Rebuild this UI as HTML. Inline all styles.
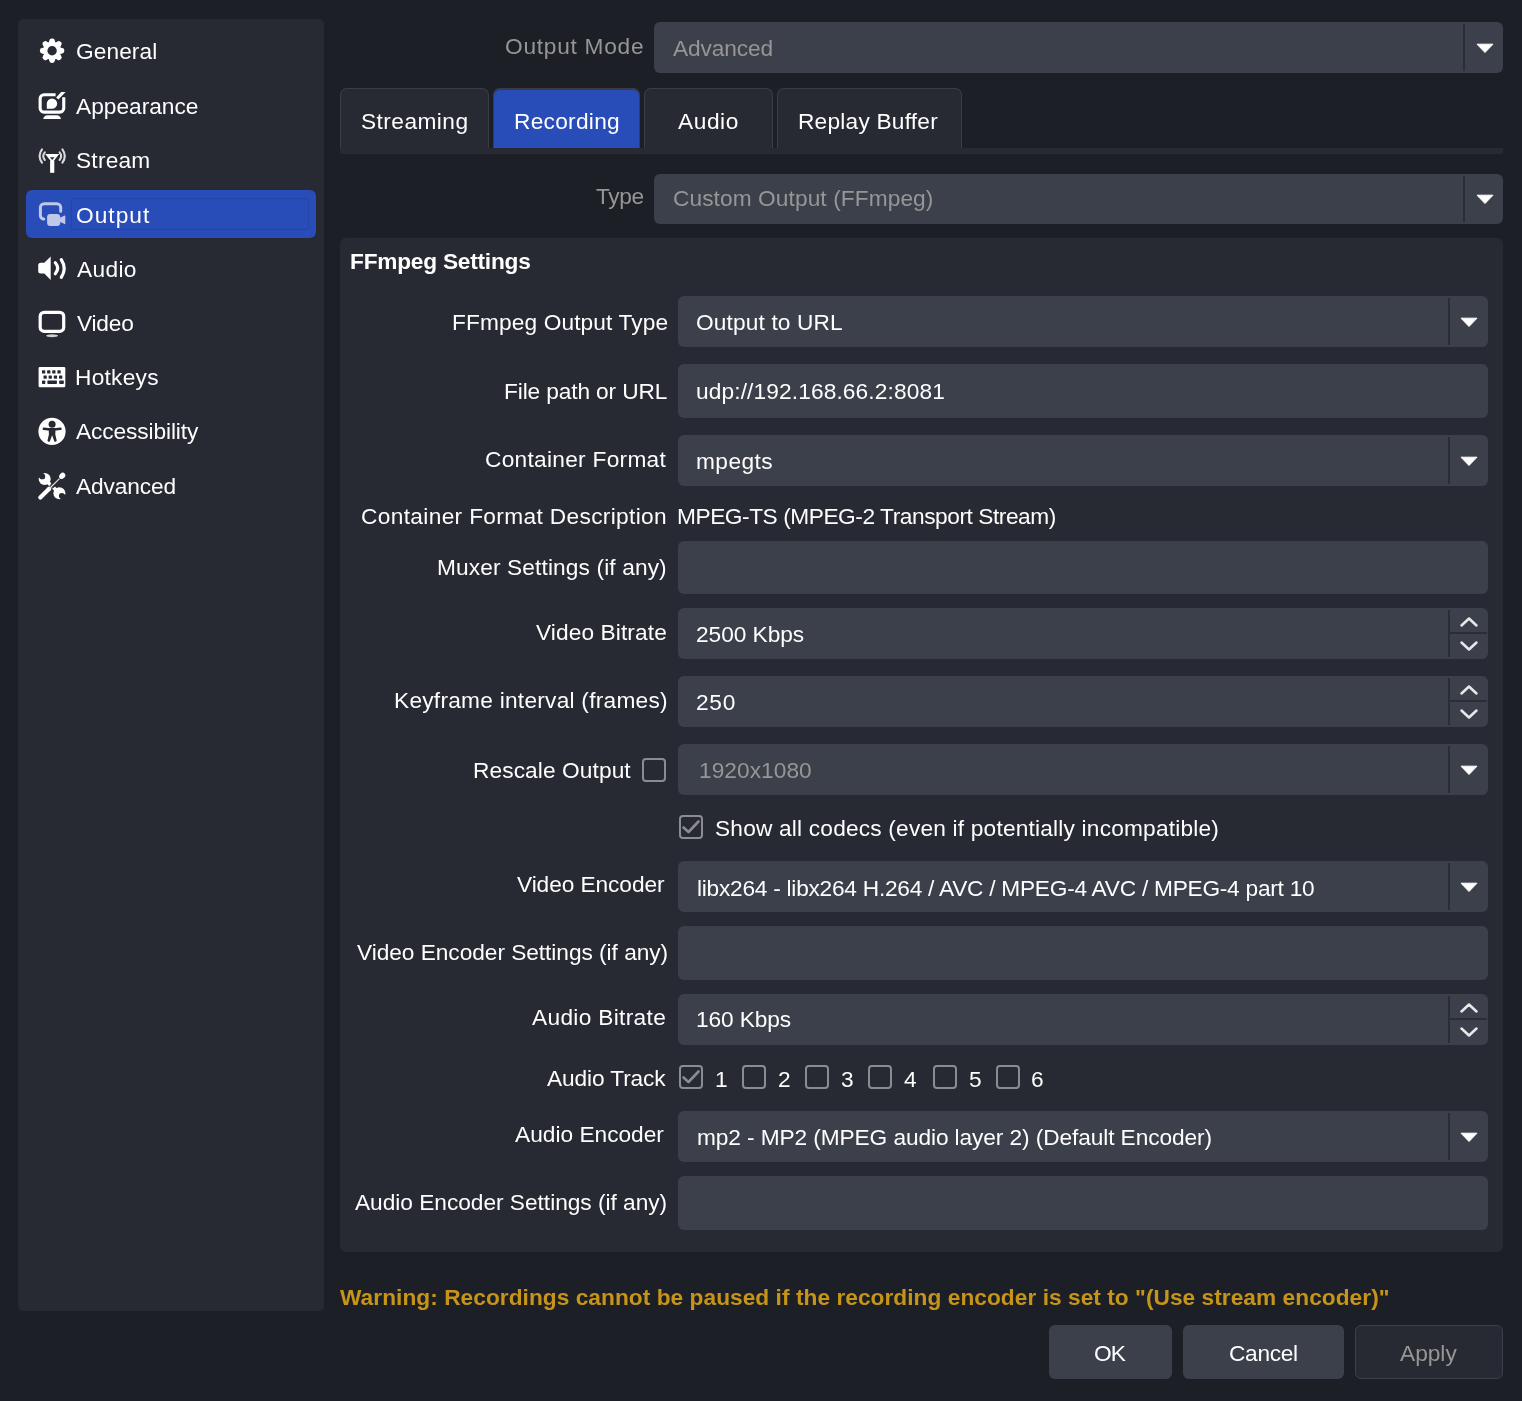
<!DOCTYPE html>
<html><head><meta charset="utf-8"><style>
html,body{margin:0;padding:0;}
body{width:1522px;height:1401px;background:#1d1f26;position:relative;overflow:hidden;font-family:"Liberation Sans",sans-serif;}
.b{position:absolute;}
.t{position:absolute;font-size:22.7px;line-height:30px;white-space:pre;will-change:transform;}
</style></head><body>
<div class=b style="left:18px;top:19px;width:306px;height:1292px;background:#272a33;border-radius:5px;"></div>
<div class=b style="left:26px;top:190px;width:290px;height:48px;background:#284cb8;border-radius:6px;"></div>
<div class=b style="left:71px;top:198px;width:238px;height:32px;background:transparent;border-radius:1px;box-sizing:border-box;border:1px solid #2544a6;"></div>
<div class=t style="left:75.80px;top:36.20px;letter-spacing:0.083px;color:#fefefe;font-weight:400;">General</div>
<div class=t style="left:76.20px;top:91.00px;letter-spacing:0.011px;color:#fefefe;font-weight:400;">Appearance</div>
<div class=t style="left:75.60px;top:145.30px;letter-spacing:0.220px;color:#fefefe;font-weight:400;">Stream</div>
<div class=t style="left:75.60px;top:199.70px;letter-spacing:1.020px;color:#fefefe;font-weight:400;">Output</div>
<div class=t style="left:76.60px;top:253.60px;letter-spacing:0.350px;color:#fefefe;font-weight:400;">Audio</div>
<div class=t style="left:76.50px;top:308.10px;letter-spacing:-0.200px;color:#fefefe;font-weight:400;">Video</div>
<div class=t style="left:74.80px;top:362.40px;letter-spacing:0.267px;color:#fefefe;font-weight:400;">Hotkeys</div>
<div class=t style="left:76.20px;top:416.10px;letter-spacing:-0.100px;color:#fefefe;font-weight:400;">Accessibility</div>
<div class=t style="left:76.20px;top:471.40px;letter-spacing:-0.114px;color:#fefefe;font-weight:400;">Advanced</div>
<div class=b style="left:654px;top:22px;width:849px;height:51px;background:#3c404b;border-radius:6px;"></div>
<div class=b style="left:1463px;top:24px;width:2px;height:47px;background:#2b2e38;border-radius:0px;"></div>
<svg class=b style="left:1475.5px;top:42.5px" width=18 height=10 viewBox="0 0 18 10"><path d="M1 1.2 L17 1.2 L9 9.5 Z" fill="#fefefe" stroke="#fefefe" stroke-width="1" stroke-linejoin="round"/></svg>
<div class=t style="left:505.30px;top:30.70px;letter-spacing:0.740px;color:#969696;font-weight:400;">Output Mode</div>
<div class=t style="left:672.70px;top:32.70px;letter-spacing:-0.100px;color:#969696;font-weight:400;">Advanced</div>
<div class=b style="left:340px;top:148px;width:1163px;height:6px;background:#272a33;border-radius:0px;"></div>
<div class=b style="left:340px;top:88px;width:149px;height:60px;background:#272a33;border-radius:7px;box-sizing:border-box;border:1px solid #3a3d48;border-bottom:none;border-bottom-left-radius:0;border-bottom-right-radius:0;"></div>
<div class=b style="left:493px;top:88px;width:147px;height:60px;background:#284cb8;border-radius:7px;box-sizing:border-box;border:1px solid #3a3d48;border-bottom:none;border-bottom-left-radius:0;border-bottom-right-radius:0;box-shadow:inset 0 1px 0 #2e3a66;"></div>
<div class=b style="left:644px;top:88px;width:129px;height:60px;background:#272a33;border-radius:7px;box-sizing:border-box;border:1px solid #3a3d48;border-bottom:none;border-bottom-left-radius:0;border-bottom-right-radius:0;"></div>
<div class=b style="left:777px;top:88px;width:185px;height:60px;background:#272a33;border-radius:7px;box-sizing:border-box;border:1px solid #3a3d48;border-bottom:none;border-bottom-left-radius:0;border-bottom-right-radius:0;"></div>
<div class=t style="left:361.00px;top:105.50px;letter-spacing:0.450px;color:#fefefe;font-weight:400;">Streaming</div>
<div class=t style="left:513.50px;top:105.50px;letter-spacing:0.287px;color:#fefefe;font-weight:400;">Recording</div>
<div class=t style="left:678.30px;top:105.50px;letter-spacing:0.575px;color:#fefefe;font-weight:400;">Audio</div>
<div class=t style="left:798.00px;top:105.50px;letter-spacing:0.225px;color:#fefefe;font-weight:400;">Replay Buffer</div>
<div class=b style="left:654px;top:174px;width:849px;height:50px;background:#3c404b;border-radius:6px;"></div>
<div class=b style="left:1463px;top:176px;width:2px;height:46px;background:#2b2e38;border-radius:0px;"></div>
<svg class=b style="left:1475.5px;top:194.0px" width=18 height=10 viewBox="0 0 18 10"><path d="M1 1.2 L17 1.2 L9 9.5 Z" fill="#fefefe" stroke="#fefefe" stroke-width="1" stroke-linejoin="round"/></svg>
<div class=t style="left:595.80px;top:181.40px;letter-spacing:-0.333px;color:#969696;font-weight:400;">Type</div>
<div class=t style="left:672.70px;top:183.40px;letter-spacing:0.090px;color:#969696;font-weight:400;">Custom Output (FFmpeg)</div>
<div class=b style="left:340px;top:238px;width:1163px;height:1014px;background:#272a33;border-radius:6px;"></div>
<div class=t style="left:349.60px;top:246.00px;letter-spacing:-0.229px;color:#fefefe;font-weight:700;">FFmpeg Settings</div>
<div class=b style="left:678px;top:296px;width:810px;height:51px;background:#3c404b;border-radius:6px;"></div>
<div class=b style="left:1448px;top:298px;width:2px;height:47px;background:#2b2e38;border-radius:0px;"></div>
<svg class=b style="left:1460px;top:316.5px" width=18 height=10 viewBox="0 0 18 10"><path d="M1 1.2 L17 1.2 L9 9.5 Z" fill="#fefefe" stroke="#fefefe" stroke-width="1" stroke-linejoin="round"/></svg>
<div class=b style="left:678px;top:364px;width:810px;height:54px;background:#3c404b;border-radius:6px;"></div>
<div class=b style="left:678px;top:435px;width:810px;height:51px;background:#3c404b;border-radius:6px;"></div>
<div class=b style="left:1448px;top:437px;width:2px;height:47px;background:#2b2e38;border-radius:0px;"></div>
<svg class=b style="left:1460px;top:455.5px" width=18 height=10 viewBox="0 0 18 10"><path d="M1 1.2 L17 1.2 L9 9.5 Z" fill="#fefefe" stroke="#fefefe" stroke-width="1" stroke-linejoin="round"/></svg>
<div class=b style="left:678px;top:541px;width:810px;height:53px;background:#3c404b;border-radius:6px;"></div>
<div class=b style="left:678px;top:608px;width:810px;height:51px;background:#3c404b;border-radius:6px;"></div>
<div class=b style="left:1448px;top:610px;width:2px;height:47px;background:#2b2e38;border-radius:0px;"></div>
<div class=b style="left:1449px;top:632px;width:38px;height:2px;background:#2b2e38;border-radius:0px;"></div>
<svg class=b style="left:1458px;top:614px" width=22 height=40 viewBox="0 0 22 40"><path d="M3.5 11.5 L11 4.5 L18.5 11.5 M3.5 28.5 L11 35.5 L18.5 28.5" fill="none" stroke="#e8e8e8" stroke-width="2.5" stroke-linecap="round" stroke-linejoin="round"/></svg>
<div class=b style="left:678px;top:676px;width:810px;height:51px;background:#3c404b;border-radius:6px;"></div>
<div class=b style="left:1448px;top:678px;width:2px;height:47px;background:#2b2e38;border-radius:0px;"></div>
<div class=b style="left:1449px;top:700px;width:38px;height:2px;background:#2b2e38;border-radius:0px;"></div>
<svg class=b style="left:1458px;top:682px" width=22 height=40 viewBox="0 0 22 40"><path d="M3.5 11.5 L11 4.5 L18.5 11.5 M3.5 28.5 L11 35.5 L18.5 28.5" fill="none" stroke="#e8e8e8" stroke-width="2.5" stroke-linecap="round" stroke-linejoin="round"/></svg>
<div class=b style="left:678px;top:744px;width:810px;height:51px;background:#3c404b;border-radius:6px;"></div>
<div class=b style="left:1448px;top:746px;width:2px;height:47px;background:#2b2e38;border-radius:0px;"></div>
<svg class=b style="left:1460px;top:764.5px" width=18 height=10 viewBox="0 0 18 10"><path d="M1 1.2 L17 1.2 L9 9.5 Z" fill="#fefefe" stroke="#fefefe" stroke-width="1" stroke-linejoin="round"/></svg>
<div class=b style="left:678px;top:861px;width:810px;height:51px;background:#3c404b;border-radius:6px;"></div>
<div class=b style="left:1448px;top:863px;width:2px;height:47px;background:#2b2e38;border-radius:0px;"></div>
<svg class=b style="left:1460px;top:881.5px" width=18 height=10 viewBox="0 0 18 10"><path d="M1 1.2 L17 1.2 L9 9.5 Z" fill="#fefefe" stroke="#fefefe" stroke-width="1" stroke-linejoin="round"/></svg>
<div class=b style="left:678px;top:926px;width:810px;height:54px;background:#3c404b;border-radius:6px;"></div>
<div class=b style="left:678px;top:994px;width:810px;height:51px;background:#3c404b;border-radius:6px;"></div>
<div class=b style="left:1448px;top:996px;width:2px;height:47px;background:#2b2e38;border-radius:0px;"></div>
<div class=b style="left:1449px;top:1018px;width:38px;height:2px;background:#2b2e38;border-radius:0px;"></div>
<svg class=b style="left:1458px;top:1000px" width=22 height=40 viewBox="0 0 22 40"><path d="M3.5 11.5 L11 4.5 L18.5 11.5 M3.5 28.5 L11 35.5 L18.5 28.5" fill="none" stroke="#e8e8e8" stroke-width="2.5" stroke-linecap="round" stroke-linejoin="round"/></svg>
<div class=b style="left:678px;top:1111px;width:810px;height:51px;background:#3c404b;border-radius:6px;"></div>
<div class=b style="left:1448px;top:1113px;width:2px;height:47px;background:#2b2e38;border-radius:0px;"></div>
<svg class=b style="left:1460px;top:1131.5px" width=18 height=10 viewBox="0 0 18 10"><path d="M1 1.2 L17 1.2 L9 9.5 Z" fill="#fefefe" stroke="#fefefe" stroke-width="1" stroke-linejoin="round"/></svg>
<div class=b style="left:678px;top:1176px;width:810px;height:54px;background:#3c404b;border-radius:6px;"></div>
<div class=t style="left:451.50px;top:306.70px;letter-spacing:0.124px;color:#fefefe;font-weight:400;">FFmpeg Output Type</div>
<div class=t style="left:503.80px;top:376.40px;letter-spacing:-0.127px;color:#fefefe;font-weight:400;">File path or URL</div>
<div class=t style="left:485.30px;top:443.80px;letter-spacing:0.287px;color:#fefefe;font-weight:400;">Container Format</div>
<div class=t style="left:361.30px;top:500.80px;letter-spacing:0.348px;color:#fefefe;font-weight:400;">Container Format Description</div>
<div class=t style="left:437.00px;top:552.20px;letter-spacing:0.123px;color:#fefefe;font-weight:400;">Muxer Settings (if any)</div>
<div class=t style="left:535.90px;top:616.50px;letter-spacing:0.108px;color:#fefefe;font-weight:400;">Video Bitrate</div>
<div class=t style="left:394.30px;top:684.60px;letter-spacing:0.252px;color:#fefefe;font-weight:400;">Keyframe interval (frames)</div>
<div class=t style="left:472.50px;top:755.00px;letter-spacing:0.100px;color:#fefefe;font-weight:400;">Rescale Output</div>
<div class=t style="left:516.90px;top:869.40px;letter-spacing:-0.075px;color:#fefefe;font-weight:400;">Video Encoder</div>
<div class=t style="left:356.80px;top:936.90px;letter-spacing:-0.040px;color:#fefefe;font-weight:400;">Video Encoder Settings (if any)</div>
<div class=t style="left:532.10px;top:1001.90px;letter-spacing:0.325px;color:#fefefe;font-weight:400;">Audio Bitrate</div>
<div class=t style="left:547.30px;top:1063.30px;letter-spacing:-0.110px;color:#fefefe;font-weight:400;">Audio Track</div>
<div class=t style="left:514.90px;top:1119.10px;letter-spacing:0.008px;color:#fefefe;font-weight:400;">Audio Encoder</div>
<div class=t style="left:355.20px;top:1186.60px;letter-spacing:-0.020px;color:#fefefe;font-weight:400;">Audio Encoder Settings (if any)</div>
<div class=t style="left:696.30px;top:307.00px;letter-spacing:0.142px;color:#fefefe;font-weight:400;">Output to URL</div>
<div class=t style="left:696.30px;top:376.00px;letter-spacing:0.127px;color:#fefefe;font-weight:400;">udp://192.168.66.2:8081</div>
<div class=t style="left:696.30px;top:445.70px;letter-spacing:0.440px;color:#fefefe;font-weight:400;">mpegts</div>
<div class=t style="left:676.50px;top:500.50px;letter-spacing:-0.438px;color:#fefefe;font-weight:400;">MPEG-TS (MPEG-2 Transport Stream)</div>
<div class=t style="left:695.60px;top:619.00px;letter-spacing:-0.038px;color:#fefefe;font-weight:400;">2500 Kbps</div>
<div class=t style="left:695.60px;top:687.00px;letter-spacing:0.750px;color:#fefefe;font-weight:400;">250</div>
<div class=t style="left:714.70px;top:813.00px;letter-spacing:0.194px;color:#fefefe;font-weight:400;">Show all codecs (even if potentially incompatible)</div>
<div class=t style="left:696.90px;top:872.80px;letter-spacing:-0.250px;color:#fefefe;font-weight:400;">libx264 - libx264 H.264 / AVC / MPEG-4 AVC / MPEG-4 part 10</div>
<div class=t style="left:695.90px;top:1004.00px;letter-spacing:-0.100px;color:#fefefe;font-weight:400;">160 Kbps</div>
<div class=t style="left:696.90px;top:1122.00px;letter-spacing:-0.096px;color:#fefefe;font-weight:400;">mp2 - MP2 (MPEG audio layer 2) (Default Encoder)</div>
<div class=t style="left:699.30px;top:754.70px;letter-spacing:0.050px;color:#969696;font-weight:400;">1920x1080</div>
<div class=b style="left:642px;top:758px;width:24px;height:24px;box-sizing:border-box;border:2px solid #8b8c91;border-radius:4px"></div>
<div class=b style="left:679px;top:815px;width:24px;height:24px;box-sizing:border-box;border:2px solid #8b8c91;border-radius:4px"></div>
<svg class=b style="left:679px;top:815px" width=24 height=24 viewBox="0 0 24 24"><path d="M4.5 12.5 L9.5 17 L19.5 6.5" fill="none" stroke="#8b8c91" stroke-width="2.6" stroke-linecap="round" stroke-linejoin="round"/></svg>
<div class=b style="left:679px;top:1065px;width:24px;height:24px;box-sizing:border-box;border:2px solid #8b8c91;border-radius:4px"></div>
<svg class=b style="left:679px;top:1065px" width=24 height=24 viewBox="0 0 24 24"><path d="M4.5 12.5 L9.5 17 L19.5 6.5" fill="none" stroke="#8b8c91" stroke-width="2.6" stroke-linecap="round" stroke-linejoin="round"/></svg>
<div class=t style="left:715.00px;top:1063.50px;letter-spacing:0.000px;color:#fefefe;font-weight:400;">1</div>
<div class=b style="left:742px;top:1065px;width:24px;height:24px;box-sizing:border-box;border:2px solid #8b8c91;border-radius:4px"></div>
<div class=t style="left:777.80px;top:1063.50px;letter-spacing:0.000px;color:#fefefe;font-weight:400;">2</div>
<div class=b style="left:805px;top:1065px;width:24px;height:24px;box-sizing:border-box;border:2px solid #8b8c91;border-radius:4px"></div>
<div class=t style="left:840.50px;top:1063.50px;letter-spacing:0.000px;color:#fefefe;font-weight:400;">3</div>
<div class=b style="left:868px;top:1065px;width:24px;height:24px;box-sizing:border-box;border:2px solid #8b8c91;border-radius:4px"></div>
<div class=t style="left:904.00px;top:1063.50px;letter-spacing:0.000px;color:#fefefe;font-weight:400;">4</div>
<div class=b style="left:933px;top:1065px;width:24px;height:24px;box-sizing:border-box;border:2px solid #8b8c91;border-radius:4px"></div>
<div class=t style="left:968.50px;top:1063.50px;letter-spacing:0.000px;color:#fefefe;font-weight:400;">5</div>
<div class=b style="left:996px;top:1065px;width:24px;height:24px;box-sizing:border-box;border:2px solid #8b8c91;border-radius:4px"></div>
<div class=t style="left:1031.10px;top:1063.50px;letter-spacing:0.000px;color:#fefefe;font-weight:400;">6</div>
<div class=t style="left:339.80px;top:1282.20px;letter-spacing:0.042px;color:#c69418;font-weight:700;">Warning: Recordings cannot be paused if the recording encoder is set to &quot;(Use stream encoder)&quot;</div>
<div class=b style="left:1049px;top:1325px;width:123px;height:54px;background:#3c404b;border-radius:6px;"></div>
<div class=b style="left:1183px;top:1325px;width:161px;height:54px;background:#3c404b;border-radius:6px;"></div>
<div class=b style="left:1355px;top:1325px;width:148px;height:54px;background:#272a33;border-radius:6px;box-sizing:border-box;border:1.5px solid #3c404b;"></div>
<div class=t style="left:1094.45px;top:1338.20px;letter-spacing:-1.000px;color:#fefefe;font-weight:400;">OK</div>
<div class=t style="left:1229.00px;top:1338.20px;letter-spacing:-0.300px;color:#fefefe;font-weight:400;">Cancel</div>
<div class=t style="left:1400.40px;top:1338.20px;letter-spacing:0.000px;color:#969696;font-weight:400;">Apply</div>
<svg class=b style="left:34px;top:34px" width="36" height="36" viewBox="0 0 36 36"><g transform="translate(18.1 16.7)" fill="#fefefe"><circle r="9.1"/><rect x="-2.7" y="-12.2" width="5.4" height="24.4" rx="2.3" transform="rotate(0)"/><rect x="-2.7" y="-12.2" width="5.4" height="24.4" rx="2.3" transform="rotate(45)"/><rect x="-2.7" y="-12.2" width="5.4" height="24.4" rx="2.3" transform="rotate(90)"/><rect x="-2.7" y="-12.2" width="5.4" height="24.4" rx="2.3" transform="rotate(135)"/><path d="M-3.3 -7.5 L-2.6 -10.2 L2.6 -10.2 L3.3 -7.5 Z" transform="rotate(0)"/><path d="M-3.3 -7.5 L-2.6 -10.2 L2.6 -10.2 L3.3 -7.5 Z" transform="rotate(45)"/><path d="M-3.3 -7.5 L-2.6 -10.2 L2.6 -10.2 L3.3 -7.5 Z" transform="rotate(90)"/><path d="M-3.3 -7.5 L-2.6 -10.2 L2.6 -10.2 L3.3 -7.5 Z" transform="rotate(135)"/><path d="M-3.3 -7.5 L-2.6 -10.2 L2.6 -10.2 L3.3 -7.5 Z" transform="rotate(180)"/><path d="M-3.3 -7.5 L-2.6 -10.2 L2.6 -10.2 L3.3 -7.5 Z" transform="rotate(225)"/><path d="M-3.3 -7.5 L-2.6 -10.2 L2.6 -10.2 L3.3 -7.5 Z" transform="rotate(270)"/><path d="M-3.3 -7.5 L-2.6 -10.2 L2.6 -10.2 L3.3 -7.5 Z" transform="rotate(315)"/><circle r="4.7" fill="#272a33"/></g></svg>
<svg class=b style="left:34px;top:87px" width="36" height="36" viewBox="0 0 36 36"><path d="M21.6 7.75 H10 A3.85 3.85 0 0 0 6.15 11.6 V21.3 A3.85 3.85 0 0 0 10 25.15 H25.9 A3.85 3.85 0 0 0 29.75 21.3 V10.2" fill="none" stroke="#fefefe" stroke-width="3.1"/><path d="M27.2 5.1 L31.6 5.1 L24.4 12.6 L22.1 10.6 Z" fill="#fefefe"/><path d="M12.8 21.8 V16.6 A5.2 5.2 0 1 1 18 21.8 Z" fill="#fefefe"/><path d="M9.2 31.9 Q10.3 28.3 13.3 28.3 H22.9 Q25.9 28.3 27 31.9 Z" fill="#fefefe"/></svg>
<svg class=b style="left:34px;top:142px" width="36" height="36" viewBox="0 0 36 36"><path d="M11.2 12.0 H25.2 L18.2 20.9 Z M15.9 15.2 L18.2 18.0 L20.5 15.2 Z" fill="#fefefe" fill-rule="evenodd"/><rect x="16.1" y="19" width="4.2" height="11.8" fill="#fefefe"/><g fill="none" stroke="#dadada" stroke-width="2.1" stroke-linecap="round"><path d="M10.8 10.4 Q7.6 14.2 10.8 18"/><path d="M8 7.3 Q3.2 14 8 20.7"/><path d="M25.6 10.4 Q28.8 14.2 25.6 18"/><path d="M28.4 7.3 Q33.2 14 28.4 20.7"/></g></svg>
<svg class=b style="left:34px;top:196px" width="36" height="36" viewBox="0 0 36 36"><path d="M9.8 23.1 A3.6 3.6 0 0 1 6.4 19.5 V11.5 A3.8 3.8 0 0 1 10.2 7.7 H22.9 A3.8 3.8 0 0 1 26.7 11.5 V15.2" fill="none" stroke="#bfc8e8" stroke-width="3" stroke-linecap="round"/><rect x="13.1" y="18" width="13.1" height="12" rx="3" fill="#bfc8e8"/><path d="M25 22.3 L30.6 19.6 Q31.3 19.4 31.3 20.1 V27.7 Q31.3 28.4 30.6 28.1 L25 25.5 Z" fill="#bfc8e8"/></svg>
<svg class=b style="left:34px;top:250px" width="36" height="36" viewBox="0 0 36 36"><path d="M4.2 15.3 Q4.2 12.8 6.7 12.8 H10.3 L16.7 6.4 V30 L10.3 23.6 H6.7 Q4.2 23.6 4.2 21.1 Z" fill="#fefefe"/><g fill="none" stroke="#fefefe" stroke-width="3.2" stroke-linecap="round"><path d="M21.3 12.8 Q26.1 18.2 21.3 23.7"/><path d="M27.3 9.6 Q33 18.5 27.3 27.4"/></g></svg>
<svg class=b style="left:34px;top:305px" width="36" height="36" viewBox="0 0 36 36"><rect x="6.2" y="7.3" width="23.5" height="19.1" rx="4" fill="none" stroke="#fefefe" stroke-width="3.2"/><ellipse cx="18.1" cy="30.7" rx="6" ry="1.5" fill="#d0d0d0"/></svg>
<svg class=b style="left:34px;top:359px" width="36" height="36" viewBox="0 0 36 36"><rect x="4.6" y="8" width="26.7" height="20.3" rx="1.2" fill="#fefefe"/><g fill="#272a33"><rect x="8" y="11.3" width="3.3" height="3.3" rx="0.6"/><rect x="13.1" y="11.3" width="3.3" height="3.3" rx="0.6"/><rect x="18.2" y="11.3" width="3.3" height="3.3" rx="0.6"/><rect x="23.4" y="11.3" width="3.3" height="3.3" rx="0.6"/><rect x="9.5" y="16.4" width="3.3" height="3.3" rx="0.6"/><rect x="14.6" y="16.4" width="3.3" height="3.3" rx="0.6"/><rect x="19.8" y="16.4" width="3.3" height="3.3" rx="0.6"/><rect x="25" y="16.4" width="3.3" height="3.3" rx="0.6"/><rect x="8" y="21.6" width="3.3" height="3.3" rx="0.6"/><rect x="13.4" y="21.6" width="9.5" height="3.3" rx="0.6"/><rect x="25.2" y="21.6" width="4.6" height="3.3" rx="0.6"/></g></svg>
<svg class=b style="left:34px;top:413px" width="36" height="36" viewBox="0 0 36 36"><circle cx="18" cy="18.4" r="13.6" fill="#fefefe"/><circle cx="18.1" cy="11.3" r="3.5" fill="#272a33"/><path d="M9.9 15.8 Q18 16.9 26.4 15.8" fill="none" stroke="#272a33" stroke-width="2.6" stroke-linecap="round"/><path d="M14.7 16.2 H21.5 L21.3 21.6 L22.7 27.5 A1.3 1.3 0 0 1 20.3 28.2 L18.1 22.3 L15.9 28.2 A1.3 1.3 0 0 1 13.5 27.5 L14.9 21.6 Z" fill="#272a33"/></svg>
<svg class=b style="left:34px;top:468px" width="36" height="36" viewBox="0 0 36 36"><g fill="#fefefe" stroke="none"><circle cx="10.7" cy="10.9" r="6"/><circle cx="25.4" cy="25.3" r="6"/></g><g stroke="#fefefe" stroke-linecap="round" fill="none"><path d="M10.7 10.9 L15.6 15.9" stroke-width="3.6"/><path d="M20.2 20.2 L25.4 25.3" stroke-width="3.6"/></g><circle cx="8.3" cy="8.4" r="2.9" fill="#272a33"/><path d="M8.3 8.4 L3 3.1" stroke="#272a33" stroke-width="5.8"/><circle cx="27.8" cy="27.8" r="2.9" fill="#272a33"/><path d="M27.8 27.8 L33.1 33.1" stroke="#272a33" stroke-width="5.8"/><path d="M17.6 18.6 L19.8 16.4" stroke="#272a33" stroke-width="4.5"/><path d="M6.3 29.6 L15.2 20.8" stroke="#fefefe" stroke-width="4.2" stroke-linecap="round"/><path d="M15.2 20.8 L25.5 10.6" stroke="#dcdcdc" stroke-width="1.3"/><ellipse cx="28.2" cy="7.8" rx="3.4" ry="2.7" transform="rotate(-45 28.2 7.8)" fill="#fefefe"/></svg>
</body></html>
